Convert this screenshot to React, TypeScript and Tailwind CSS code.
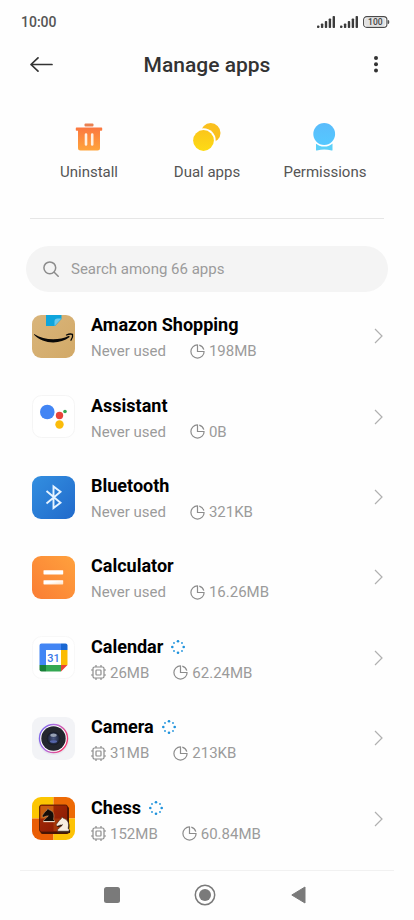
import type { ReactNode } from "react";

type AppEntry = {
  name: string;
  storage: string;
  memory?: string;
  icon: ReactNode;
};

function AmazonIcon() {
  return (
    <svg viewBox="0 0 43 43" className="size-full" aria-hidden="true">
      <defs>
        <linearGradient id="amz" x1="0" y1="0" x2="1" y2="1">
          <stop offset="0" stopColor="#d9b57b" />
          <stop offset="1" stopColor="#d2a967" />
        </linearGradient>
      </defs>
      <rect width="43" height="43" rx="9" fill="url(#amz)" />
      <path d="M14 0h15.500v4l-6.500 7H14z" fill="#0fa5dc" />
      <path d="M29.500 3.500 22.500 11V6.500c0-2 1-3 3-3z" fill="#6cc9ec" />
      <path d="M2.500 19.200c5.500 3.400 11.700 5 18.700 5 5.800 0 10.800-1 15.300-3.200 1-.4 1.600.6.800 1.200-4.300 3.400-10 5.200-16.100 5.200-7.400 0-14-2.600-18.900-7.400-.5-.6-.4-1.200.2-.8z" fill="#080808" />
      <path d="M34.500 20c2-.9 4.600-1.200 6-.6.500 1.900-.2 4.100-1.500 5.800" fill="none" stroke="#080808" strokeWidth="1.300" strokeLinecap="round" />
    </svg>
  );
}

function AssistantIcon() {
  return (
    <svg viewBox="0 0 43 43" className="size-full" aria-hidden="true">
      <rect x=".5" y=".5" width="42" height="42" rx="9" fill="#fff" stroke="#f5f5f5" />
      <circle cx="15.300" cy="17" r="7.300" fill="#4285f4" />
      <circle cx="27.500" cy="20.500" r="3.700" fill="#e8443a" />
      <circle cx="33" cy="16.500" r="1.800" fill="#34a853" />
      <circle cx="27.500" cy="29.500" r="4.200" fill="#fbbc0a" />
    </svg>
  );
}

function BluetoothIcon() {
  return (
    <svg viewBox="0 0 43 43" className="size-full" aria-hidden="true">
      <defs>
        <linearGradient id="bt" x1="0" y1="0" x2="1" y2="1">
          <stop offset="0" stopColor="#338fe0" />
          <stop offset="1" stopColor="#216acb" />
        </linearGradient>
      </defs>
      <rect width="43" height="43" rx="9" fill="url(#bt)" />
      <path d="M14.500 15 28.500 26.800 21.500 32V10.500L28.500 15.800 14.500 27.500" fill="none" stroke="#e6f3ff" strokeWidth="1.900" strokeLinejoin="miter" />
    </svg>
  );
}

function CalculatorIcon() {
  return (
    <svg viewBox="0 0 43 43" className="size-full" aria-hidden="true">
      <defs>
        <linearGradient id="calc" x1="1" y1="0" x2="0" y2="1">
          <stop offset="0" stopColor="#ffa13d" />
          <stop offset="1" stopColor="#fa7d34" />
        </linearGradient>
        <linearGradient id="calcBar" x1="0" y1="0" x2="1" y2="1">
          <stop offset=".4" stopColor="#fff" />
          <stop offset="1" stopColor="#ffe0c2" />
        </linearGradient>
      </defs>
      <rect width="43" height="43" rx="9" fill="url(#calc)" />
      <rect x="11.500" y="14.200" width="19.700" height="4.200" rx=".6" fill="#fff" />
      <rect x="11.500" y="24.200" width="19.700" height="4.200" rx=".6" fill="url(#calcBar)" />
    </svg>
  );
}

function CalendarIcon() {
  return (
    <svg viewBox="0 0 43 43" className="size-full" aria-hidden="true">
      <rect x=".5" y=".5" width="42" height="42" rx="9" fill="#fff" stroke="#f8f8f8" />
      <path d="M9.500 7.500H29V14H14v15H7.500V9.500a2 2 0 0 1 2-2z" fill="#4285f4" />
      <path d="M29 7.500h4.500a2 2 0 0 1 2 2V14H29z" fill="#1967d2" />
      <path d="M29 14h6.500v15H29z" fill="#fbbc04" />
      <path d="M14 29h15v6.500H14z" fill="#34a853" />
      <path d="M7.500 29H14v6.500H9.500a2 2 0 0 1-2-2z" fill="#188038" />
      <path d="M29 29h6.500L29 35.500z" fill="#ea4335" />
      <path d="M14 14h15v15H14z" fill="#fff" />
      <text x="21.500" y="26" textAnchor="middle" fontSize="11" fontWeight="500" fill="#3b78e7">31</text>
    </svg>
  );
}

function CameraIcon() {
  return (
    <svg viewBox="0 0 43 43" className="size-full" aria-hidden="true">
      <defs>
        <linearGradient id="ring" x1="0" y1="0" x2="1" y2=".4">
          <stop offset="0" stopColor="#6d63ee" />
          <stop offset=".5" stopColor="#b36ddc" />
          <stop offset="1" stopColor="#f03d78" />
        </linearGradient>
        <radialGradient id="lens">
          <stop offset="0" stopColor="#4c5985" />
          <stop offset=".65" stopColor="#2a3350" />
          <stop offset="1" stopColor="#14161e" />
        </radialGradient>
      </defs>
      <rect width="43" height="43" rx="9" fill="#f2f3f6" />
      <circle cx="21.500" cy="22.500" r="15.500" fill="#e8e9f0" />
      <circle cx="21.500" cy="21.500" r="14" fill="#fff" stroke="url(#ring)" strokeWidth="1.400" />
      <circle cx="21.500" cy="21.500" r="12.200" fill="#23262e" />
      <circle cx="21.500" cy="21.500" r="6.800" fill="url(#lens)" />
      <ellipse cx="21.500" cy="18.300" rx="3.200" ry="1.700" fill="#98a1b3" />
      <ellipse cx="21.500" cy="24.600" rx="3.600" ry="1.400" fill="#5665ab" />
    </svg>
  );
}

const KNIGHT =
  "M1.500 13.500h11v-1.800l-1-.7c1-4.300.5-8.300-4.300-9.700L5.700 0 5 1.600C3.200 2.800 2 4.800.4 6.900c-.5 1 .3 2 1.400 1.700l2.500-1c.7.2 1.400 0 1.900-.5C6 8.900 3.100 9.500 2.800 11l-1.300.7z";

function ChessIcon() {
  return (
    <svg viewBox="0 0 43 43" className="size-full" aria-hidden="true">
      <defs>
        <clipPath id="chessClip">
          <rect width="43" height="43" rx="9" />
        </clipPath>
        <linearGradient id="board" x1="0" y1="0" x2="1" y2="1">
          <stop offset="0" stopColor="#a92f06" />
          <stop offset="1" stopColor="#851604" />
        </linearGradient>
      </defs>
      <g clipPath="url(#chessClip)">
        <path d="M0 0h21.500v21.500H0z" fill="#fcc602" />
        <path d="M21.500 0H43v21.500H21.500z" fill="#ed6a05" />
        <path d="M0 21.500h21.500V43H0z" fill="#ea5e05" />
        <path d="M21.500 21.500H43V43H21.500z" fill="#fdc306" />
        <rect x="8.500" y="9.500" width="28.500" height="27.500" rx="2" fill="#4c1503" />
        <rect x="7.500" y="8" width="28" height="27" rx="2" fill="url(#board)" />
        <path d="M8.500 9h13v12.500h-13z" fill="#c95f10" />
        <path d="M21.500 21.500h13V34h-13z" fill="#a53609" />
        <rect x="7.500" y="8" width="28" height="27" rx="2" fill="none" stroke="#4a1504" strokeWidth=".8" />
        <path d={KNIGHT} transform="translate(10 11.500)" fill="#160d08" stroke="#cfa47c" strokeWidth=".5" />
        <path d="M11.500 24.500h11.200" stroke="#e8d6c4" strokeWidth="1" />
        <path d={KNIGHT} transform="translate(25 21) scale(1.050)" fill="#2b1107" />
        <path d={KNIGHT} transform="translate(24 20) scale(1.050)" fill="#f7eee3" stroke="#3a2517" strokeWidth=".5" />
        <path d="M25.500 35.500h12.500" stroke="#40220f" strokeWidth="1" />
      </g>
    </svg>
  );
}

const apps: AppEntry[] = [
  { name: "Amazon Shopping", storage: "198MB", icon: <AmazonIcon /> },
  { name: "Assistant", storage: "0B", icon: <AssistantIcon /> },
  { name: "Bluetooth", storage: "321KB", icon: <BluetoothIcon /> },
  { name: "Calculator", storage: "16.26MB", icon: <CalculatorIcon /> },
  { name: "Calendar", storage: "62.24MB", memory: "26MB", icon: <CalendarIcon /> },
  { name: "Camera", storage: "213KB", memory: "31MB", icon: <CameraIcon /> },
  { name: "Chess", storage: "60.84MB", memory: "152MB", icon: <ChessIcon /> },
];

function Signal() {
  return (
    <svg viewBox="0 0 18 12" className="h-3 w-[18px]" fill="#3c3c3c" aria-hidden="true">
      <rect x="0" y="9.500" width="2.400" height="2.500" rx=".8" />
      <rect x="3.900" y="7.500" width="2.400" height="4.500" rx=".8" />
      <rect x="7.800" y="5" width="2.400" height="7" rx=".8" />
      <rect x="11.700" y="2.500" width="2.400" height="9.500" rx=".8" />
      <rect x="15.600" y="0" width="2.400" height="12" rx=".8" />
    </svg>
  );
}

function Battery() {
  return (
    <svg viewBox="0 0 27 12" className="h-3 w-[27px]" role="img" aria-label="Battery 100">
      <rect x=".6" y=".6" width="23.300" height="10.800" rx="3.200" fill="#fff" stroke="#4a4a4a" strokeWidth="1.100" />
      <rect x="2" y="2" width="20.500" height="8" rx="2" fill="#e2e2e2" />
      <path d="M25 4.200c1.300 0 1.300 3.600 0 3.600z" fill="#4a4a4a" stroke="#4a4a4a" strokeWidth=".6" />
      <text x="12.300" y="9" textAnchor="middle" fontSize="8.500" fontWeight="500" fill="#444">100</text>
    </svg>
  );
}

function PieIcon() {
  return (
    <svg viewBox="0 0 15 15" className="size-[15px] shrink-0" fill="none" stroke="#8c8c8c" strokeWidth="1.200" aria-hidden="true">
      <path d="M7.500.9a6.600 6.600 0 1 0 6.600 6.600" />
      <path d="M7.500.4v7.100h6.900" />
      <path d="M9.300 1.100a6.600 6.600 0 0 1 4.500 4.500" />
    </svg>
  );
}

function ChipIcon() {
  return (
    <svg viewBox="0 0 15 15" className="size-[15px] shrink-0" fill="none" stroke="#8c8c8c" strokeWidth="1.200" aria-hidden="true">
      <rect x="2" y="2" width="11" height="11" rx="1.500" />
      <rect x="5" y="5" width="5" height="5" rx=".8" />
      <path d="M5 0v2M10 0v2M5 13v2M10 13v2M0 5h2M0 10h2M13 5h2M13 10h2" />
    </svg>
  );
}

function RunningIcon() {
  return (
    <svg viewBox="0 0 14 14" className="size-3.5 shrink-0" fill="#1e92dc" role="img" aria-label="Running">
      <circle cx="7" cy="1.300" r="1.300" />
      <circle cx="11" cy="3" r=".9" />
      <circle cx="12.700" cy="7" r="1.300" />
      <circle cx="11" cy="11" r=".9" />
      <circle cx="7" cy="12.700" r="1.300" />
      <circle cx="3" cy="11" r=".9" />
      <circle cx="1.300" cy="7" r="1.300" />
      <circle cx="3" cy="3" r=".9" />
    </svg>
  );
}

function TrashIcon() {
  return (
    <svg viewBox="0 0 28 28" className="size-7" aria-hidden="true">
      <defs>
        <linearGradient id="trash" x1="0" y1="0" x2="0" y2="1">
          <stop offset="0" stopColor="#fb7740" />
          <stop offset="1" stopColor="#ffa43c" />
        </linearGradient>
      </defs>
      <rect x="9.500" y=".5" width="9" height="3" rx="1" fill="#ea8050" />
      <path d="M1.500 4.500h25a.7.7 0 0 1 .7.700V7a.7.7 0 0 1-.7.700H25V25a2.500 2.500 0 0 1-2.500 2.500h-17A2.500 2.500 0 0 1 3 25V7.700H1.500A.7.700 0 0 1 .8 7V5.200a.7.700 0 0 1 .7-.7z" fill="url(#trash)" />
      <path d="M11 11.500v10M17.200 11.500v10" stroke="#fff0e2" strokeWidth="2.600" strokeLinecap="round" />
    </svg>
  );
}

function DualIcon() {
  return (
    <svg viewBox="0 0 28 28" className="size-7" aria-hidden="true">
      <defs>
        <linearGradient id="dual" x1="0" y1="0" x2="0" y2="1">
          <stop offset="0" stopColor="#fbc61b" />
          <stop offset="1" stopColor="#fddb15" />
        </linearGradient>
      </defs>
      <circle cx="17.700" cy="9.900" r="9.800" fill="#fac01e" />
      <circle cx="10.500" cy="17.500" r="12.200" fill="#fff" />
      <circle cx="10.500" cy="17.500" r="10.400" fill="url(#dual)" />
    </svg>
  );
}

function PermissionIcon() {
  return (
    <svg viewBox="0 0 28 28" className="size-7" aria-hidden="true">
      <defs>
        <linearGradient id="perm" x1="0" y1="0" x2="0" y2="1">
          <stop offset="0" stopColor="#5abcfb" />
          <stop offset="1" stopColor="#55c8ff" />
        </linearGradient>
      </defs>
      <path d="M5 20.500h16.500V27c0 .5-.4.700-.9.500-5-1.500-9.700-1.500-14.700 0-.5.200-.9 0-.9-.5z" fill="#5dd0f8" />
      <circle cx="13.200" cy="11" r="12.600" fill="#fff" />
      <circle cx="13.200" cy="11" r="10.900" fill="url(#perm)" />
    </svg>
  );
}

const actions = [
  { label: "Uninstall", icon: <TrashIcon /> },
  { label: "Dual apps", icon: <DualIcon /> },
  { label: "Permissions", icon: <PermissionIcon /> },
];

function AppRow({ app }: { app: AppEntry }) {
  return (
    <li className="flex flex-1">
      <button type="button" className="flex flex-1 items-center pr-[31px] pl-8 text-left">
        <span className="size-[43px] shrink-0">{app.icon}</span>
        <span className="ml-4 flex flex-1 flex-col gap-0.5 pt-1">
          <span className="flex items-center gap-2 text-lg leading-6 font-bold text-black">
            {app.name}
            {app.memory && <RunningIcon />}
          </span>
          <span className="flex items-center gap-6 text-[15px] leading-6 text-[#9b9b9b]">
            {app.memory ? (
              <span className="flex items-center gap-1">
                <ChipIcon />
                {app.memory}
              </span>
            ) : (
              <span>Never used</span>
            )}
            <span className="flex items-center gap-1">
              <PieIcon />
              {app.storage}
            </span>
          </span>
        </span>
        <svg viewBox="0 0 9 16" className="h-4 w-[9px] shrink-0" fill="none" stroke="#b0b0b0" strokeWidth="1.200" aria-hidden="true">
          <path d="m1 1 7 7-7 7" />
        </svg>
      </button>
    </li>
  );
}

export default function App() {
  return (
    <div className="flex min-h-screen flex-col bg-[#fefefe] font-[Roboto,'Noto_Sans',sans-serif] text-[#333]">
      <div className="flex h-11 items-center justify-between pr-6 pl-[21px]">
        <span className="text-sm font-medium text-[#555]">10:00</span>
        <div className="flex items-center gap-[5px]">
          <Signal />
          <Signal />
          <Battery />
        </div>
      </div>

      <header className="flex h-[42px] items-center justify-between px-[30px]">
        <button type="button" aria-label="Back" className="w-6">
          <svg viewBox="0 0 24 16" className="h-4 w-6" fill="none" stroke="#333" strokeWidth="1.700" strokeLinecap="round" strokeLinejoin="round" aria-hidden="true">
            <path d="M22 7.500H1M8 .9 1 7.500l7 6.600" />
          </svg>
        </button>
        <h1 className="text-[21px] leading-7 font-medium">Manage apps</h1>
        <button type="button" aria-label="More options" className="flex w-6 justify-end pr-1">
          <svg viewBox="0 0 8 18" className="h-[18px] w-2" fill="#333" aria-hidden="true">
            <circle cx="4" cy="2" r="2" />
            <circle cx="4" cy="8.300" r="2" />
            <circle cx="4" cy="14.600" r="2" />
          </svg>
        </button>
      </header>

      <nav aria-label="App actions" className="mx-[30px] grid grid-cols-3 border-b border-[#e6e6e6] pt-[37px] pb-[34px]">
        {actions.map((action) => (
          <button key={action.label} type="button" className="flex flex-col items-center gap-[9px] text-[15px] leading-6 text-[#555]">
            {action.icon}
            {action.label}
          </button>
        ))}
      </nav>

      <label className="mx-[26px] mt-[27px] flex h-[46px] items-center gap-3 rounded-full bg-[#f4f4f4] px-[17px]">
        <svg viewBox="0 0 16 16" className="size-4 shrink-0" fill="none" stroke="#8c8c8c" strokeWidth="1.500" strokeLinecap="round" aria-hidden="true">
          <circle cx="6.800" cy="6.800" r="5.900" />
          <path d="m11.200 11.200 4 4" />
        </svg>
        <input
          type="search"
          aria-label="Search apps"
          placeholder="Search among 66 apps"
          className="min-w-0 flex-1 bg-transparent text-[15px] leading-6 outline-none placeholder:text-[#9b9b9b]"
        />
      </label>

      <ul className="mt-1 flex flex-1 flex-col pb-[11px]">
        {apps.map((app) => (
          <AppRow key={app.name} app={app} />
        ))}
      </ul>

      <nav aria-label="System navigation" className="mx-5 grid h-[50px] grid-cols-3 items-center justify-items-center border-t border-[#f1f1f1] pr-12 pb-0.5 pl-[45px]">
        <button type="button" aria-label="Recent apps">
          <svg viewBox="0 0 16 16" className="size-4" aria-hidden="true">
            <rect width="16" height="16" rx="2.500" fill="#7a7a7a" />
          </svg>
        </button>
        <button type="button" aria-label="Home">
          <svg viewBox="0 0 22 22" className="size-[22px]" aria-hidden="true">
            <circle cx="11" cy="11" r="9.700" fill="none" stroke="#7a7a7a" strokeWidth="1.500" />
            <circle cx="11" cy="11" r="6" fill="#7a7a7a" />
          </svg>
        </button>
        <button type="button" aria-label="Go back">
          <svg viewBox="0 0 16 18" className="h-[18px] w-4" aria-hidden="true">
            <path d="M14 1v16L.800 9z" fill="#7a7a7a" stroke="#7a7a7a" strokeLinejoin="round" />
          </svg>
        </button>
      </nav>
    </div>
  );
}
